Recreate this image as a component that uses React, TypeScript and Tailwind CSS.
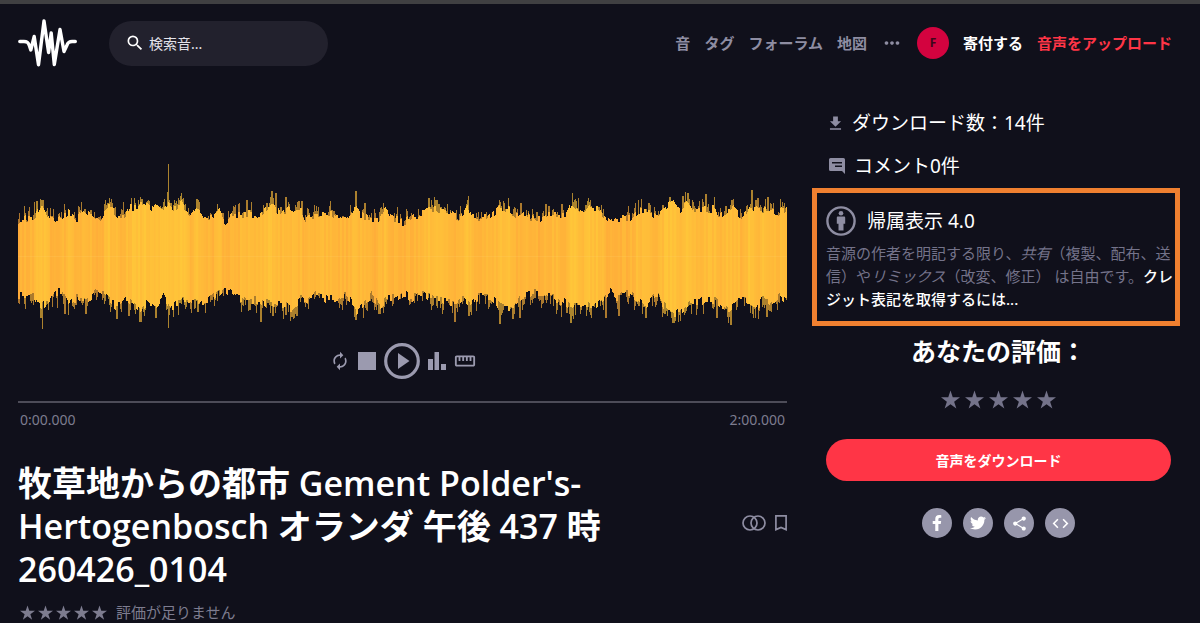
import type { ReactNode } from 'react';
import { FaFacebookF, FaTwitter } from 'react-icons/fa';
import { MdAutorenew, MdCode, MdFileDownload, MdMoreHoriz, MdSearch, MdShare, MdStraighten } from 'react-icons/md';

type Point = [number, number];

// Waveform outline in viewBox units, three per bar
const TOP: Point[] = [
  [55, 215], [75, 205], [100, 200], [125, 160], [150, 200], [170, 215], [205, 185], [230, 205], [250, 180], [280, 200],
  [300, 215], [325, 170], [350, 190], [375, 200], [390, 170], [415, 170], [430, 160], [460, 180], [470, 165], [490, 180],
  [505, 160], [520, 175], [545, 160], [570, 195], [590, 165], [610, 195], [640, 200], [660, 180], [675, 215], [700, 195],
  [740, 190], [780, 195], [800, 180], [820, 165], [840, 190], [865, 175], [880, 190], [905, 185], [915, 210], [940, 195],
  [990, 190], [1010, 200], [1040, 205], [1065, 165], [1080, 195], [1110, 205], [1135, 205], [1155, 175], [1180, 205],
  [1210, 215], [1230, 205], [1260, 190], [1280, 180], [1310, 175], [1350, 185], [1375, 205], [1405, 170], [1415, 200],
  [1460, 200], [1500, 175], [1525, 180], [1550, 200], [1575, 185], [1590, 205], [1620, 210], [1640, 195], [1700, 195],
  [1715, 160], [1730, 170], [1750, 190], [1770, 170], [1800, 180], [1830, 215], [1860, 205], [1890, 205], [1915, 180],
  [1940, 180], [1970, 195], [2000, 165], [2020, 150], [2040, 180], [2060, 155], [2075, 185], [2110, 180], [2145, 175],
  [2155, 200], [2180, 185], [2200, 175], [2225, 200], [2250, 165], [2275, 180], [2300, 175], [2330, 190], [2355, 175], [2361, 180],
];

const BOTTOM: Point[] = [
  [55, 440], [100, 440], [125, 475], [150, 455], [165, 430], [185, 430], [205, 465], [230, 445], [260, 460], [290, 430],
  [310, 440], [350, 475], [380, 450], [420, 480], [440, 465], [465, 480], [490, 440], [510, 480], [535, 465], [560, 450],
  [590, 465], [615, 455], [650, 440], [680, 425], [710, 440], [740, 455], [780, 455], [820, 470], [850, 470], [875, 480],
  [900, 450], [920, 455], [950, 440], [980, 450], [1010, 450], [1040, 440], [1068, 485], [1090, 470], [1115, 440],
  [1140, 475], [1160, 450], [1180, 450], [1210, 435], [1235, 450], [1270, 435], [1300, 450], [1335, 460], [1365, 460],
  [1390, 445], [1410, 470], [1430, 445], [1470, 440], [1500, 475], [1540, 480], [1565, 440], [1600, 435], [1630, 435],
  [1670, 450], [1715, 475], [1750, 470], [1780, 475], [1805, 460], [1830, 430], [1850, 450], [1890, 430], [1920, 460],
  [1940, 470], [1970, 440], [1990, 470], [2020, 495], [2040, 490], [2060, 470], [2090, 460], [2130, 450], [2160, 465],
  [2190, 480], [2215, 455], [2235, 455], [2270, 480], [2285, 450], [2310, 470], [2340, 440], [2361, 460],
];

const TOP_PEAKS: Point[] = [
  [103, 157], [125, 150], [370, 155], [425, 148], [502, 125], [505, 43], [535, 145], [550, 145], [590, 147], [740, 150],
  [815, 122], [828, 130], [857, 140], [905, 152], [1068, 122], [1094, 160], [1310, 150], [1405, 137], [1510, 152],
  [1563, 158], [1637, 163], [1685, 162], [1717, 130], [1735, 145], [1915, 150], [2010, 142], [2048, 138], [2063, 130],
  [2118, 133], [2143, 140], [2195, 150], [2256, 120], [2268, 150], [2304, 142],
];

const BOTTOM_PEAKS: Point[] = [
  [122, 505], [127, 538], [195, 493], [205, 495], [257, 493], [350, 508], [386, 498], [420, 517], [467, 505], [505, 533],
  [520, 500], [535, 495], [592, 485], [783, 517], [817, 497], [857, 496], [875, 500], [890, 498], [1068, 510], [1090, 503],
  [1140, 493], [1365, 515], [1407, 497], [1500, 523], [1538, 508], [1560, 503], [1713, 520], [1817, 503], [1857, 498],
  [1938, 503], [2018, 520], [2026, 512], [2150, 505], [2193, 525], [2266, 505], [2275, 508], [2300, 500],
];

function valueAt(points: Point[], x: number) {
  const i = points.findIndex((p) => p[0] >= x);
  if (i <= 0) return points[i === 0 ? 0 : points.length - 1][1];
  const [x0, y0] = points[i - 1];
  const [x1, y1] = points[i];
  return y0 + ((y1 - y0) * (x - x0)) / (x1 - x0);
}

function noise(n: number) {
  const v = Math.sin(n * 127.1 + 11.7) * 43758.5453;
  return v - Math.floor(v);
}

const BARS = Array.from({ length: 769 }, (_, i) => {
  const x = 55 + i * 3;
  const pair = Math.floor(i / 2);
  const top = valueAt(TOP, x) + noise(pair) * 24 - 11;
  const bottom = valueAt(BOTTOM, x) - noise(pair + 900) * 28 + 10;
  const topPeak = TOP_PEAKS.find((p) => Math.abs(p[0] - x) < 3);
  const bottomPeak = BOTTOM_PEAKS.find((p) => Math.abs(p[0] - x) < 3);
  const jitterTop = noise(pair + 2000) > 0.55 ? noise(i + 3000) * 30 : 0;
  const jitterBottom = noise(pair + 4000) > 0.5 ? noise(i + 5000) * 36 : 0;
  const level = (215 - valueAt(TOP, x)) / 55;
  const green = Math.round(170 + Math.min(1, Math.max(0, level)) * 20 + noise(pair + 7000) * 12);
  return {
    x,
    top,
    bottom,
    tipTop: topPeak ? topPeak[1] : top - jitterTop,
    tipBottom: bottomPeak ? bottomPeak[1] : bottom + jitterBottom,
    color: `rgb(255, ${green}, 57)`,
  };
});

const NAV_LINKS = ['音', 'タグ', 'フォーラム', '地図'];

function Waveform() {
  return (
    <svg viewBox="55 0 2307 570" preserveAspectRatio="none" className="block w-full h-[190px]" shapeRendering="crispEdges" aria-hidden="true">
      {BARS.map((bar) => (
        <g key={bar.x} fill={bar.color}>
          <rect x={bar.x} y={bar.tipTop} width={3} height={bar.tipBottom - bar.tipTop} opacity={0.65} />
          <rect x={bar.x} y={bar.top} width={3} height={bar.bottom - bar.top} />
        </g>
      ))}
      <rect x={55} y={318} width={2307} height={3} fill="#ffd070" opacity={0.2} />
    </svg>
  );
}

function Logo() {
  return (
    <svg viewBox="0 0 60 48" className="w-[60px] h-12" fill="none" stroke="currentColor" strokeWidth={3.4} strokeLinecap="round" strokeLinejoin="round" aria-hidden="true">
      <path d="M1.800 22.500H6c3.400 0 4.400 1.200 5.400 4.200L12.800 31l3.400-13.500 4.300 28.300L26 2l4.600 31.500L33.200 14l3.100 31.500L42 10.500l4 22 2.800-6c1.200-3 2-4 5.200-4h3.300" />
    </svg>
  );
}

function Star({ className }: { className: string }) {
  return (
    <svg viewBox="0 0 20 19" className={className} fill="currentColor" aria-hidden="true">
      <path d="M10 0l2.360 7.250H20l-6.180 4.500L16.180 19 10 14.520 3.820 19l2.360-7.250L0 7.250h7.640z" />
    </svg>
  );
}

function SocialLink({ label, children }: { label: string; children: ReactNode }) {
  return (
    <a href="#" aria-label={label} className="flex items-center justify-center size-[30px] rounded-full bg-[#9796ab] text-white">
      {children}
    </a>
  );
}

function Header() {
  return (
    <header className="flex items-center justify-between h-[78px] pl-[18px] pr-7">
      <div className="flex items-center gap-[31px]">
        <a href="#" aria-label="Home">
          <Logo />
        </a>
        <label className="flex items-center gap-1 w-[219px] h-[45px] pl-4 pr-4 rounded-full bg-[#22212d]">
          <MdSearch className="size-5 shrink-0" />
          <input
            type="search"
            placeholder="検索音..."
            aria-label="検索音"
            className="min-w-0 flex-1 bg-transparent text-[14px] placeholder:text-[#e4e3ea] focus:outline-none"
          />
        </label>
      </div>
      <nav className="flex items-center gap-[14px] text-[15px] font-bold whitespace-nowrap">
        {NAV_LINKS.map((link) => (
          <a key={link} href="#" className="text-[#8e8da2]">
            {link}
          </a>
        ))}
        <button aria-label="More" className="text-[#8e8da2]">
          <MdMoreHoriz className="size-[22px]" />
        </button>
        <a href="#" className="flex items-center justify-center size-8 rounded-full bg-[#d3033f] text-[12px] text-[#3d0719]">
          F
        </a>
        <a href="#">寄付する</a>
        <a href="#" className="text-[#ff3546]">音声をアップロード</a>
      </nav>
    </header>
  );
}

function Player() {
  return (
    <section className="pt-[68px]">
      <Waveform />
      <div className="flex items-center justify-center h-9 mt-[3px] gap-[8px] text-[#9b9aaf]">
        <button aria-label="Loop">
          <MdAutorenew className="size-5" />
        </button>
        <button aria-label="Stop" className="size-[18px] bg-current" />
        <button aria-label="Play">
          <svg viewBox="0 0 36 36" className="size-9" aria-hidden="true">
            <circle cx="18" cy="18" r="16.300" fill="none" stroke="currentColor" strokeWidth={3.2} />
            <path d="M14 10l11.500 8L14 26z" fill="currentColor" />
          </svg>
        </button>
        <button aria-label="Spectrogram">
          <svg viewBox="0 0 18 18" className="size-[18px]" fill="currentColor" aria-hidden="true">
            <path d="M0 7h5v11H0zM6.500 0h4.500v18H6.500zM13 12h5v6h-5z" />
          </svg>
        </button>
        <button aria-label="Ruler">
          <MdStraighten className="size-[22px]" />
        </button>
      </div>
      <div className="h-[2px] mt-[22px] bg-[#4d4c58]" />
      <div className="flex justify-between px-[2px] mt-[7px] text-[14px] leading-5 text-[#7d7c8f]">
        <span>0:00.000</span>
        <span>2:00.000</span>
      </div>
    </section>
  );
}

function SoundTitle() {
  return (
    <section className="mt-8">
      <div className="flex items-center justify-between gap-8">
        <h1 className="text-[34px] leading-[43px] font-semibold font-['Open_Sans','Noto_Sans_CJK_JP',sans-serif]">
          牧草地からの都市 Gement Polder's-Hertogenbosch オランダ 午後 437 時 260426_0104
        </h1>
        <div className="flex items-center gap-[9px] pb-2 text-[#8e8da2]">
          <button aria-label="Similar sounds">
            <svg viewBox="0 0 24 16" className="w-6 h-4" fill="none" stroke="currentColor" strokeWidth={1.700} aria-hidden="true">
              <circle cx="8" cy="8" r="7" />
              <circle cx="16" cy="8" r="7" />
            </svg>
          </button>
          <button aria-label="Bookmark">
            <svg viewBox="0 0 12 16" className="w-3 h-4" fill="none" stroke="currentColor" strokeWidth={1.700} aria-hidden="true">
              <path d="M.9.900h10.200v13.700L6 12.400.9 14.600z" />
            </svg>
          </button>
        </div>
      </div>
      <div className="flex items-center gap-[9px] mt-[11px] pl-[2px] text-[15px] leading-5 text-[#7d7c8f]">
        <div className="flex gap-[3px]">
          {[1, 2, 3, 4, 5].map((n) => (
            <Star key={n} className="size-[15px]" />
          ))}
        </div>
        <span>評価が足りません</span>
      </div>
    </section>
  );
}

function License() {
  return (
    <section className="mt-2 border-[5px] border-[#f08030] pt-[13px] pb-[10px] pl-[9px]">
      <div className="flex items-center gap-[11px] h-[30px]">
        <svg viewBox="0 0 30 30" className="size-[30px] text-[#8e8da2]" fill="currentColor" aria-hidden="true">
          <circle cx="15" cy="15" r="13.600" fill="none" stroke="currentColor" strokeWidth={2.400} />
          <circle cx="15" cy="7.300" r="2.300" />
          <path d="M12 10.500h6c.7 0 1.200.5 1.200 1.200v6.100h-1.700v6.700h-5v-6.700h-1.700v-6.100c0-.7.5-1.200 1.200-1.200z" />
        </svg>
        <h2 className="text-[19px] leading-7">帰属表示 4.0</h2>
      </div>
      <p className="mt-[6px] text-[15px] leading-[23px] text-[#74738a]">
        音源の作者を明記する限り、<em>共有</em>（複製、配布、送信）や<em>リミックス</em>（改変、修正） は自由です。
        <a href="#" className="font-medium text-white">クレジット表記を取得するには...</a>
      </p>
    </section>
  );
}

function Sidebar() {
  return (
    <aside className="w-[368px] shrink-0 pt-[27px]">
      <a href="#" className="flex items-center gap-[7px] pl-[14px] text-[19px] leading-7">
        <MdFileDownload className="size-[19px] text-[#8e8da2]" />
        ダウンロード数：14件
      </a>
      <a href="#" className="flex items-center gap-[9px] mt-[15px] pl-[17px] text-[19px] leading-7">
        <svg viewBox="0 0 16 16" className="size-4 text-[#8e8da2]" aria-hidden="true">
          <path d="M1.500 0h13A1.500 1.500 0 0 1 16 1.500V16l-3-3H1.500A1.500 1.500 0 0 1 0 11.500v-10A1.500 1.500 0 0 1 1.500 0z" fill="currentColor" />
          <path d="M3 4.800h10M6 8.300h7" stroke="#10101b" strokeWidth={1.500} />
        </svg>
        コメント0件
      </a>
      <License />
      <div className="flex flex-col items-center pl-[14px] pr-[9px]">
        <h2 className="mt-[9px] text-[25px] leading-8 font-bold">あなたの評価：</h2>
        <div className="flex gap-[5px] mt-[23px] text-[#74738a]">
          {[1, 2, 3, 4, 5].map((n) => (
            <button key={n} aria-label={`${n}`}>
              <Star className="size-[19px]" />
            </button>
          ))}
        </div>
        <button className="w-full h-[42px] mt-[30px] rounded-full bg-[#ff3546] text-[14px] font-bold">
          音声をダウンロード
        </button>
        <div className="flex gap-[11px] mt-[27px]">
          <SocialLink label="Facebook"><FaFacebookF className="size-4" /></SocialLink>
          <SocialLink label="Twitter"><FaTwitter className="size-4" /></SocialLink>
          <SocialLink label="Share"><MdShare className="size-[17px]" /></SocialLink>
          <SocialLink label="Embed"><MdCode className="size-[19px]" /></SocialLink>
        </div>
      </div>
    </aside>
  );
}

export default function App() {
  return (
    <div lang="ja" className="min-h-screen border-t-4 border-[#404042] bg-[#10101b] text-white font-['Noto_Sans','Noto_Sans_CJK_JP',sans-serif]">
      <Header />
      <main className="flex gap-[25px] pl-[18px] pr-5">
        <div className="flex-1 min-w-0">
          <Player />
          <SoundTitle />
        </div>
        <Sidebar />
      </main>
    </div>
  );
}
